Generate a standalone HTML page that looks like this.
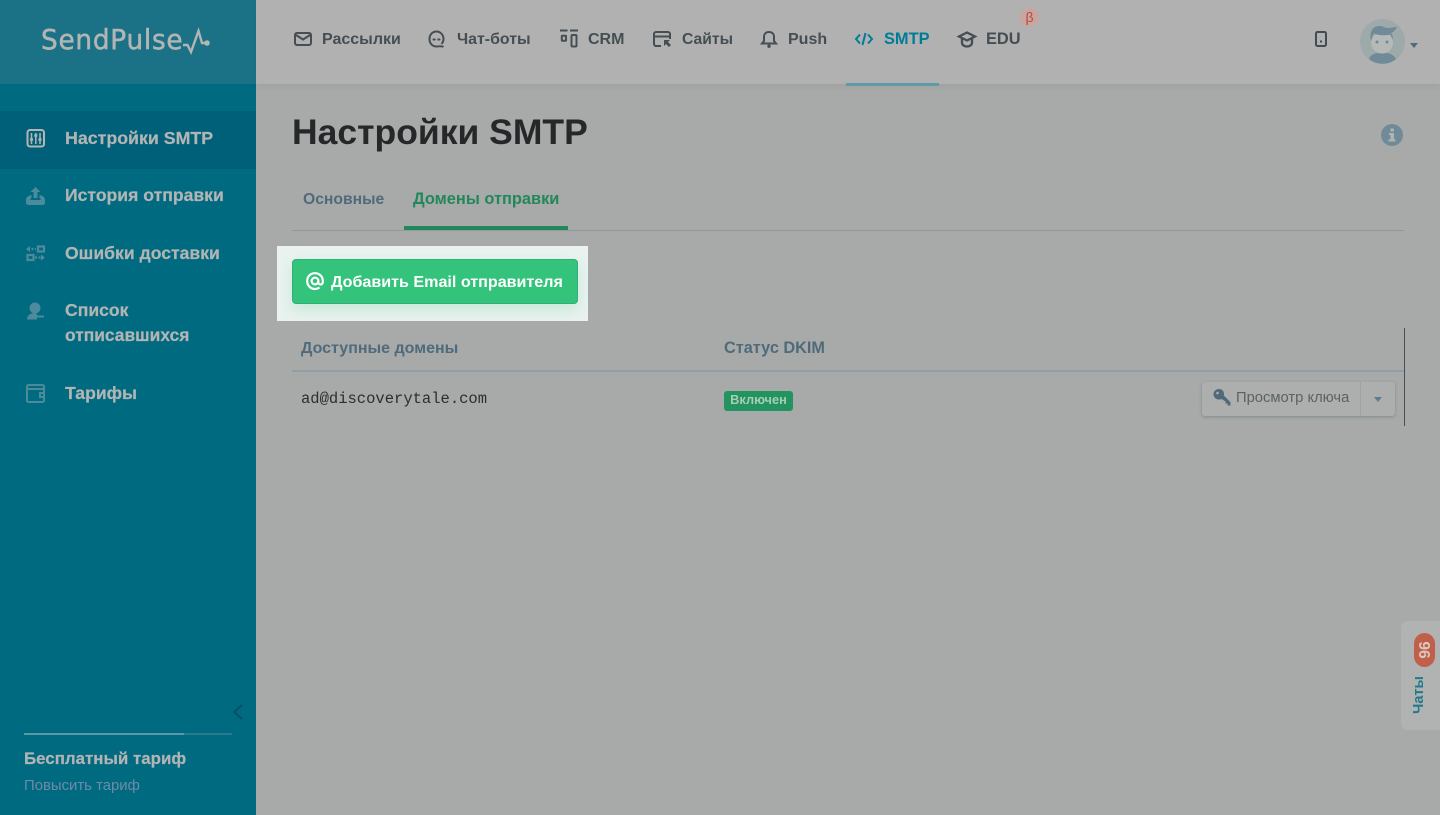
<!DOCTYPE html>
<html lang="ru"><head><meta charset="utf-8"><title>Настройки SMTP</title>
<style>
html,body{margin:0;padding:0;width:1440px;height:815px;overflow:hidden;background:#a8aaa9;font-family:"Liberation Sans","Noto Sans CJK SC",sans-serif}
.a{position:absolute;white-space:nowrap}
svg{position:absolute;overflow:visible}
.side{font-weight:700;font-size:17.6px;color:#b2b5b4;line-height:26px;-webkit-text-stroke:.2px #b2b5b4}
.nav{font-weight:700;font-size:16px;color:#454e53;line-height:22px}
</style></head><body>
<div class="a" style="left:0;top:0;width:256px;height:815px;background:#006a80"></div>
<div class="a" style="left:0;top:0;width:256px;height:84px;background:#1b7287"></div>
<div class="a" style="left:0;top:111px;width:256px;height:58px;background:#00607a"></div>
<div class="a" style="left:256px;top:0;width:1184px;height:84px;background:#b1b1b1;box-shadow:0 2px 6px rgba(0,0,0,.06)"></div>

<div class="a" style="left:41px;top:24px;font-size:28px;line-height:32px;color:#b2b5b4;letter-spacing:.8px;font-family:'DejaVu Sans',sans-serif;transform-origin:0 50%;transform:scaleX(.94);-webkit-text-stroke:.5px #b2b5b4">SendPulse</div>
<svg style="left:182px;top:28px" width="30" height="26" fill="none" stroke="#b2b5b4" stroke-width="2.4"><path d="M1 17H5.500L9 24L16.500 3L20 15H25"/><circle cx="25" cy="15" r="2.800" fill="#b2b5b4" stroke="none"/></svg>

<svg style="left:26px;top:129px" width="20" height="20" fill="none" stroke="#b2b5b4" stroke-width="2"><rect x="1.500" y="1" width="16.500" height="16.500" rx="2.500"/><path d="M5.500 4V15M9.800 4V15M14 4V15" stroke-width="1.500"/><path d="M4 10.500H7M8.300 6.500H11.300M12.500 10.500H15.500" stroke-width="2.500"/></svg>
<svg style="left:26px;top:187px" width="20" height="20" fill="#4d8a9b"><path d="M9.500 0L14.500 5H11.500V11H7.500V5H4.500Z"/><path d="M0 13C0 10 2 9 5.500 8V11C4 11.500 4 13 5 13H14C15 13 15 11.500 13.500 11V8C17 9 19 10 19 13V15.500C19 17 18 18 16 18H3C1 18 0 17 0 15.500Z"/></svg>
<svg style="left:26px;top:244px" width="20" height="20" fill="none" stroke="#4d8a9b" stroke-width="2.200"><rect x="12" y="2.500" width="6" height="5"/><rect x="1.500" y="11" width="6" height="5"/><path d="M2 5H10M9 13.500H17" stroke-dasharray="2 1.500"/><path d="M0 5L4 2V8Z M19 13.500L15 10.500V16.500Z" fill="#4d8a9b" stroke="none"/></svg>
<svg style="left:26px;top:302px" width="20" height="20" fill="#4d8a9b"><circle cx="9" cy="6" r="5.500"/><path d="M1 17.500C1 13.500 4 11 9 11C10 11 11 12 11 13V17.500Z"/><rect x="11" y="13.500" width="7" height="2"/></svg>
<svg style="left:26px;top:384px" width="20" height="20" fill="none" stroke="#4d8a9b" stroke-width="2"><rect x="1" y="1" width="17" height="17" rx="1.500"/><path d="M1 5H18M18 9H14V13H18"/></svg>

<div class="a side" style="left:65px;top:125px;font-size:17.800px">Настройки SMTP</div>
<div class="a side" style="left:65px;top:182px">История отправки</div>
<div class="a side" style="left:65px;top:240px">Ошибки доставки</div>
<div class="a side" style="left:65px;top:297px">Список</div>
<div class="a side" style="left:65px;top:322px;font-size:17.400px">отписавшихся</div>
<div class="a side" style="left:65px;top:380px">Тарифы</div>

<svg style="left:232px;top:704px" width="12" height="16" fill="none" stroke="#0a4a5e" stroke-width="1.500"><path d="M10 1L2 8L10 15"/></svg>
<div class="a" style="left:24px;top:733px;width:208px;height:2px;background:#2a7a8e"></div>
<div class="a" style="left:24px;top:733px;width:160px;height:2px;background:#5a98a6"></div>
<div class="a side" style="left:24px;top:746px;font-size:16.900px">Бесплатный тариф</div>
<div class="a" style="left:24px;top:776px;font-size:14.900px;line-height:20px;color:#6f8aa8">Повысить тариф</div>

<svg style="left:294px;top:30px" width="20" height="18" fill="none" stroke="#454e53" stroke-width="2"><rect x="1" y="3" width="16" height="12" rx="2"/><path d="M2 5L9 9.500L16 5"/></svg>
<div class="a nav" style="left:322px;top:29px">Рассылки</div>
<svg style="left:428px;top:30px" width="18" height="19" fill="none" stroke="#454e53" stroke-width="2"><path d="M15.500 17C13.500 15.500 11.500 16.500 8.500 16.500C4.500 16.500 1.500 13.500 1.500 9S4.500 1.500 8.500 1.500S15.500 5 15.500 9C15.500 11 14.800 12.500 13.500 14"/><path d="M5.500 9.500H6.800M10.200 9.500H11.500" stroke-linecap="round"/></svg>
<div class="a nav" style="left:457px;top:29px;font-size:15.900px">Чат-боты</div>
<svg style="left:560px;top:29px" width="19" height="20" fill="none" stroke="#454e53" stroke-width="2"><path d="M0 1.500H7.500M10 1.500H18"/><rect x="1.800" y="6.800" width="4.200" height="5" rx=".5"/><rect x="11.500" y="6" width="5" height="11.500" rx="1"/></svg>
<div class="a nav" style="left:588px;top:29px">CRM</div>
<svg style="left:653px;top:31px" width="19" height="17" fill="none" stroke="#454e53" stroke-width="2"><path d="M8 15H3C2 15 1 14 1 13V3C1 2 2 1 3 1H15C16 1 17 2 17 3V8M1 5.500H17"/><path d="M11 9H17L15 11L18 14L16 16L13 13L11 15Z" fill="#454e53" stroke="none"/></svg>
<div class="a nav" style="left:682px;top:29px;font-size:15.700px">Сайты</div>
<svg style="left:761px;top:30px" width="16" height="18" fill="none" stroke="#454e53" stroke-width="2"><path d="M1 13.500H15L13 11V7C13 4 11 2 8 2S3 4 3 7V11Z"/><circle cx="8" cy="16.200" r="1.700" fill="#454e53" stroke="none"/></svg>
<div class="a nav" style="left:788px;top:29px">Push</div>
<svg style="left:855px;top:32px" width="18" height="14" fill="none" stroke="#007d96" stroke-width="2"><path d="M5 2.500L1 7L5 11.500M13 2.500L17 7L13 11.500M10.500 1L7.500 13"/></svg>
<div class="a nav" style="left:884px;top:28px;color:#007d96;font-size:16.400px">SMTP</div>
<div class="a" style="left:846px;top:83px;width:93px;height:3px;background:#5f9aa8"></div>
<svg style="left:958px;top:31px" width="18" height="17" fill="none" stroke="#454e53" stroke-width="2.300"><path d="M9 1.500L17 5.500L9 9.500L1 5.500Z"/><path d="M4 8V12C4 14 6.500 15.500 9 15.500S14 14 14 12V8"/></svg>
<div class="a nav" style="left:986px;top:28px;font-size:16.400px">EDU</div>
<div class="a" style="left:1020px;top:8px;width:19px;height:19px;border-radius:50%;background:#c9a5a0;color:#bc4a3e;font-size:14px;line-height:19px;text-align:center">β</div>

<svg style="left:1315px;top:31px" width="12" height="16" fill="none" stroke="#3f4d52" stroke-width="2"><rect x="1" y="1" width="10" height="14" rx="1.500"/><rect x="5" y="9.500" width="2" height="2" fill="#3f4d52" stroke="none"/></svg>
<svg style="left:1360px;top:19px" width="46" height="46"><circle cx="22.500" cy="22.500" r="22.500" fill="#9eaaaa"/><path d="M9 40C10 36 15 33.500 22 33.500S34 36 36 40C32 43.500 27 44.700 22.500 44.700S13 43.500 9 40Z" fill="#6f8a98"/><ellipse cx="22" cy="24" rx="11" ry="10.500" fill="#b5b9b8"/><path d="M11 22C9 12 13 7 20 7C23 7 25 9 28 9C31 9 34 8 37 8C35 11 34 13 31 14C33 16 33 19 33 21C32 18 31 16 30 15.500C24 17 17 16 14 14.500C12 17 12 20 11 22Z" fill="#6f8a98"/><circle cx="17" cy="23" r="1.500" fill="#6f8a98"/><circle cx="27" cy="23" r="1.500" fill="#6f8a98"/></svg>
<div class="a" style="left:1410px;top:43px;border-left:4.500px solid transparent;border-right:4.500px solid transparent;border-top:5px solid #4f6b7b"></div>

<div class="a" style="left:292px;top:110px;font-size:35.500px;line-height:44px;font-weight:700;color:#252728">Настройки SMTP</div>
<svg style="left:1381px;top:124px" width="22" height="22"><circle cx="11" cy="11" r="11" fill="#6f8a98"/><path d="M8 9H13V15.500H14.500V17.500H7.500V15.500H9.500V11H8Z M9.500 4.500H12.800V7.500H9.500Z" fill="#b0b5b4"/></svg>

<div class="a" style="left:303px;top:189px;font-size:15.700px;line-height:22px;font-weight:700;color:#4f6b7b">Основные</div>
<div class="a" style="left:413px;top:188px;font-size:16.400px;line-height:22px;font-weight:700;color:#22875a">Домены отправки</div>
<div class="a" style="left:292px;top:230px;width:1112px;height:1px;background:#8f9a9d"></div>
<div class="a" style="left:404px;top:226px;width:164px;height:4px;background:#22875a"></div>

<div class="a" style="left:277px;top:246px;width:311px;height:75px;background:#e9f2ef;overflow:hidden">
  <div class="a" style="left:15px;top:13px;width:286px;height:45px;box-sizing:border-box;border:1px solid #2fae78;border-radius:4px;background:#33c37a;box-shadow:0 6px 14px rgba(51,195,122,.18)"></div>
</div>
<svg style="left:306px;top:272px" width="18" height="18" fill="none" stroke="#fff" stroke-width="2.200"><path d="M13.500 15.500C12 16.500 10.500 17 9 17C4.500 17 1.200 13.500 1.200 9S4.500 1.200 9 1.200S16.800 4.500 16.800 9V10C16.800 11.500 15.800 12.500 14.500 12.500S12.300 11.500 12.300 10V9"/><circle cx="9" cy="9" r="3.400"/></svg>
<div class="a" style="left:331px;top:272px;font-size:16.100px;line-height:21px;font-weight:700;color:#fff">Добавить Email отправителя</div>

<div class="a" style="left:301px;top:338px;font-size:16px;line-height:22px;font-weight:700;color:#4f6b7b">Доступные домены</div>
<div class="a" style="left:724px;top:337px;font-size:16.300px;line-height:22px;font-weight:700;color:#4f6b7b">Статус DKIM</div>
<div class="a" style="left:292px;top:370px;width:1112px;height:2px;background:#8f9fa3"></div>
<div class="a" style="left:1404px;top:328px;width:1px;height:98px;background:#4a5052"></div>
<div class="a" style="left:301px;top:389px;font-family:'Liberation Mono',monospace;font-size:15.500px;line-height:20px;color:#2c2e2f">ad@discoverytale.com</div>
<div class="a" style="left:724px;top:391px;width:69px;height:20px;border-radius:3px;background:#23935f;color:#a7cdb8;font-size:12.800px;font-weight:700;line-height:18px;text-align:center">Включен</div>

<div class="a" style="left:1202px;top:382px;width:193px;height:34px;border-radius:3px;background:#adafae;box-shadow:0 1px 3px rgba(70,90,100,.4)"></div>
<div class="a" style="left:1360px;top:382px;width:1px;height:34px;background:#9ba3a3"></div>
<svg style="left:1213px;top:389px" width="18" height="18" fill="#4f6b7b"><path d="M6 0C9 0 11 2 11 5C11 5.500 11 6 10.800 6.500L17.500 13.200V16.500H14.500V14.500H12.500V12.500L8.500 10C7.800 10.300 7 10.500 6 10.500C3 10.500 0.500 8.200 0.500 5.200C0.500 2.300 3 0 6 0Z"/><circle cx="4.500" cy="4" r="1.300" fill="#adafae"/></svg>
<div class="a" style="left:1236px;top:388px;font-size:14.750px;line-height:20px;color:#5b6265">Просмотр ключа</div>
<div class="a" style="left:1374px;top:397px;border-left:4.500px solid transparent;border-right:4.500px solid transparent;border-top:5px solid #5a7f95"></div>

<div class="a" style="left:1401px;top:621px;width:45px;height:109px;border-radius:7px;background:#b0b3b2"></div>
<div class="a" style="left:1414px;top:633px;width:21px;height:34px;border-radius:11px;background:#c0604a"></div>
<div class="a" style="left:1406px;top:640px;width:34px;height:20px;line-height:20px;text-align:center;font-size:15.500px;font-weight:700;color:#d9c7c0;transform:rotate(90deg)">96</div>
<div class="a" style="left:1399px;top:686px;width:40px;height:18px;line-height:18px;text-align:center;font-size:14.500px;font-weight:700;color:#22798c;transform:rotate(-90deg)">Чаты</div>
</body></html>
